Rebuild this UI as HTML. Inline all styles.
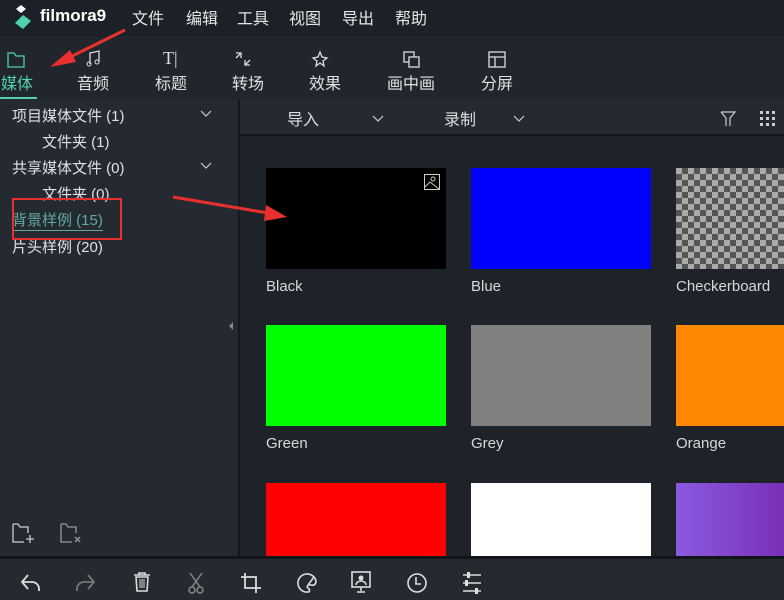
<!DOCTYPE html>
<html><head><meta charset="utf-8"><style>
*{margin:0;padding:0;box-sizing:border-box}
body{width:784px;height:600px;overflow:hidden;background:#1e2229;font-family:"Liberation Sans","Noto Sans CJK SC",sans-serif;color:#e4e6e8;position:relative}
.a{position:absolute}
.top{left:0;top:0;width:784px;height:36px;background:#1c2027}
.menu{top:5px;font-size:16px;color:#e6e6e6}
.tabs{left:0;top:37px;width:784px;height:62px;background:#21262d}
.tab{top:70px;font-size:16px;color:#e0e0e0}
.left{left:0;top:99px;width:238px;height:457px;background:#252a32}
.vd{left:238px;top:99px;width:2px;height:457px;background:#15181c}
.li{font-size:15px;color:#e0e0e0}
.hdr{left:240px;top:99px;width:544px;height:37px;background:#252a32;border-bottom:2px solid #14171b}
.th{width:180px;height:101px}
.lb{font-size:15px;color:#d8d8d8}
.bot{left:0;top:556px;width:784px;height:44px;background:#252a31;border-top:3px solid #111418}
svg{position:absolute;overflow:visible}
</style></head><body>
<div class="a top"></div>
<svg style="left:14px;top:5px" width="22" height="24" viewBox="0 0 22 24"><path d="M2 4l5-4 5 4-5 4z" fill="#fff"/><path d="M9 10l8 6-8 8-8-6z" fill="#4fd1b0"/></svg>
<div class="a" style="left:40px;top:6px;font-size:17px;font-weight:bold;color:#fff">filmora9</div>
<div class="a menu" style="left:132px">文件</div>
<div class="a menu" style="left:186px">编辑</div>
<div class="a menu" style="left:237px">工具</div>
<div class="a menu" style="left:289px">视图</div>
<div class="a menu" style="left:342px">导出</div>
<div class="a menu" style="left:395px">帮助</div>
<div class="a tabs"></div>
<svg style="left:7px;top:52px" width="18" height="16"><path d="M1 1h6l2 3h8v11H1z" fill="none" stroke="#4fd1b0" stroke-width="1.3"/></svg>
<svg style="left:85px;top:50px" width="18" height="18"><path d="M5 14V3l9-2v11" fill="none" stroke="#ddd" stroke-width="1.3"/><circle cx="4" cy="14" r="2" fill="none" stroke="#ddd"/><circle cx="12" cy="12" r="2" fill="none" stroke="#ddd"/></svg>
<div class="a" style="left:163px;top:48px;font-size:18px;color:#ddd;font-family:'Liberation Serif',serif">T|</div>
<svg style="left:234px;top:51px" width="18" height="16"><path d="M2 7l5-5M2 2h5v5M16 9l-5 5M16 14h-5v-5" fill="none" stroke="#ddd" stroke-width="1.3"/></svg>
<svg style="left:311px;top:51px" width="18" height="16"><path d="M9 1l2 5 5 1-4 3 1 5-4-3-4 3 1-5-4-3 5-1z" fill="none" stroke="#ddd" stroke-width="1.3"/></svg>
<svg style="left:403px;top:51px" width="18" height="18"><rect x="1" y="1" width="10" height="10" fill="none" stroke="#ddd" stroke-width="1.3"/><rect x="6" y="6" width="10" height="10" fill="#21262d" stroke="#ddd" stroke-width="1.3"/></svg>
<svg style="left:488px;top:51px" width="18" height="18"><rect x="1" y="1" width="16" height="15" fill="none" stroke="#ddd" stroke-width="1.3"/><path d="M1 6h16M7 6v10" stroke="#ddd" stroke-width="1.3"/></svg>
<div class="a tab" style="left:1px;color:#4fd1b0">媒体</div>
<div class="a" style="left:0;top:97px;width:37px;height:2px;background:#4fd1b0"></div>
<div class="a tab" style="left:77px">音频</div>
<div class="a tab" style="left:155px">标题</div>
<div class="a tab" style="left:232px">转场</div>
<div class="a tab" style="left:309px">效果</div>
<div class="a tab" style="left:387px">画中画</div>
<div class="a tab" style="left:481px">分屏</div>
<div class="a left"></div>
<div class="a vd"></div>
<div class="a" style="left:229px;top:322px;width:0;height:0;border:4px solid transparent;border-right:4px solid #888;border-left:0"></div>
<div class="a li" style="left:12px;top:105px">项目媒体文件 (1)</div>
<div class="a li" style="left:42px;top:131px">文件夹 (1)</div>
<div class="a li" style="left:12px;top:157px">共享媒体文件 (0)</div>
<div class="a li" style="left:42px;top:183px">文件夹 (0)</div>
<div class="a li" style="left:12px;top:209px;color:#5fa9a0;border-bottom:1px solid #5fa9a0">背景样例 (15)</div>
<div class="a li" style="left:12px;top:236px">片头样例 (20)</div>
<svg style="left:200px;top:110px" width="12" height="8"><path d="M1 1l5 5 5-5" fill="none" stroke="#ccc" stroke-width="1.2"/></svg>
<svg style="left:200px;top:162px" width="12" height="8"><path d="M1 1l5 5 5-5" fill="none" stroke="#ccc" stroke-width="1.2"/></svg>
<div class="a" style="left:12px;top:198px;width:110px;height:42px;border:2px solid #e8302e"></div>
<svg style="left:12px;top:523px" width="26" height="22"><path d="M1 1h5l2 3h8v6M1 1v18h11M14 16h8M18 12v8" fill="none" stroke="#ccc" stroke-width="1.3"/></svg>
<svg style="left:60px;top:523px" width="26" height="22"><path d="M1 1h5l2 3h8v6M1 1v18h11M15 14l5 5M20 14l-5 5" fill="none" stroke="#999" stroke-width="1.3"/></svg>
<div class="a hdr"></div>
<div class="a" style="left:287px;top:106px;font-size:16px;color:#ddd">导入</div>
<svg style="left:372px;top:115px" width="12" height="8"><path d="M1 1l5 5 5-5" fill="none" stroke="#ccc" stroke-width="1.2"/></svg>
<div class="a" style="left:444px;top:106px;font-size:16px;color:#ddd">录制</div>
<svg style="left:513px;top:115px" width="12" height="8"><path d="M1 1l5 5 5-5" fill="none" stroke="#ccc" stroke-width="1.2"/></svg>
<svg style="left:720px;top:111px" width="16" height="16"><path d="M1 1h14l-5 6v8M6 7v8M1 1l5 6" fill="none" stroke="#ccc" stroke-width="1.2"/></svg>
<svg style="left:760px;top:111px" width="16" height="16" fill="#ccc"><rect x="0" y="0" width="3" height="3"/><rect x="6" y="0" width="3" height="3"/><rect x="12" y="0" width="3" height="3"/><rect x="0" y="6" width="3" height="3"/><rect x="6" y="6" width="3" height="3"/><rect x="12" y="6" width="3" height="3"/><rect x="0" y="12" width="3" height="3"/><rect x="6" y="12" width="3" height="3"/><rect x="12" y="12" width="3" height="3"/></svg>
<div class="a th" style="left:266px;top:168px;background:#000"></div>
<svg style="left:424px;top:174px" width="16" height="16"><rect x="0.5" y="0.5" width="15" height="15" fill="none" stroke="#ccc"/><circle cx="9" cy="5" r="2" fill="none" stroke="#ccc"/><path d="M1 13l5-5 9 7" fill="none" stroke="#ccc"/></svg>
<div class="a th" style="left:471px;top:168px;background:#0000ff"></div>
<div class="a th" style="left:676px;top:168px;width:108px;background:repeating-conic-gradient(#555 0 25%,#a9a9a9 0 50%) 0 0/12px 12px"></div>
<div class="a lb" style="left:266px;top:278px">Black</div>
<div class="a lb" style="left:471px;top:278px">Blue</div>
<div class="a lb" style="left:676px;top:278px">Checkerboard</div>
<div class="a th" style="left:266px;top:325px;background:#00ff00"></div>
<div class="a th" style="left:471px;top:325px;background:#808080"></div>
<div class="a th" style="left:676px;top:325px;width:108px;background:#ff8800"></div>
<div class="a lb" style="left:266px;top:435px">Green</div>
<div class="a lb" style="left:471px;top:435px">Grey</div>
<div class="a lb" style="left:676px;top:435px">Orange</div>
<div class="a th" style="left:266px;top:483px;height:73px;background:#ff0000"></div>
<div class="a th" style="left:471px;top:483px;height:73px;background:#fff"></div>
<div class="a th" style="left:676px;top:483px;width:108px;height:73px;background:linear-gradient(90deg,#8a5ae0,#7a2fb8)"></div>
<div class="a bot"></div>
<svg style="left:20px;top:573px" width="22" height="20"><path d="M8 2L2 9l6 7M2 9h10a7 7 0 0 1 7 7v2" fill="none" stroke="#ddd" stroke-width="1.8"/></svg>
<svg style="left:76px;top:573px" width="22" height="20"><path d="M12 2l6 7-6 7M18 9H8a7 7 0 0 0-7 7v2" fill="none" stroke="#777" stroke-width="1.8"/></svg>
<svg style="left:133px;top:572px" width="18" height="20"><path d="M1 3h16M6 3V1h6v2M3 5h12l-1 14H4z" fill="none" stroke="#ddd" stroke-width="1.6"/><path d="M7 7v9M9 7v9M11 7v9" stroke="#ddd"/></svg>
<svg style="left:187px;top:572px" width="18" height="22"><path d="M3 1l10 14M15 1L5 15" stroke="#888" stroke-width="1.5"/><circle cx="5" cy="18" r="3" fill="none" stroke="#888" stroke-width="1.5"/><circle cx="13" cy="18" r="3" fill="none" stroke="#888" stroke-width="1.5"/></svg>
<svg style="left:240px;top:572px" width="22" height="22"><path d="M5 1v15h16M1 5h15v16" fill="none" stroke="#ddd" stroke-width="1.8"/></svg>
<svg style="left:296px;top:572px" width="22" height="22"><path d="M10 2a9 9 0 1 0 2 18c2 0 2-3 0-4s0-4 3-3 5-1 5-4A9 9 0 0 0 10 2z" fill="none" stroke="#ddd" stroke-width="1.6"/><path d="M12 13l6-8" stroke="#ddd" stroke-width="1.6"/></svg>
<svg style="left:350px;top:571px" width="22" height="22"><rect x="2" y="1" width="18" height="15" fill="none" stroke="#ddd" stroke-width="1.6"/><circle cx="11" cy="7" r="2.5" fill="#ddd"/><path d="M6 14a5 4 0 0 1 10 0M11 16v4M7 21h8" stroke="#ddd" stroke-width="1.6" fill="none"/></svg>
<svg style="left:406px;top:572px" width="22" height="22"><circle cx="11" cy="11" r="9" fill="none" stroke="#ddd" stroke-width="1.6"/><path d="M10 5v7h5" fill="none" stroke="#ddd" stroke-width="1.6"/></svg>
<svg style="left:461px;top:572px" width="22" height="22"><path d="M2 3h18M2 11h18M2 19h18" stroke="#ddd" stroke-width="1.6"/><rect x="6" y="0" width="3" height="6" fill="#ddd"/><rect x="4" y="8" width="3" height="6" fill="#ddd"/><rect x="14" y="16" width="3" height="6" fill="#ddd"/></svg>
<svg style="left:0;top:0" width="784" height="600"><path d="M125 30L64 60" stroke="#e8302e" stroke-width="3"/><path d="M50 67L70 50 76 62z" fill="#e8302e"/><path d="M173 197L268 213" stroke="#e8302e" stroke-width="3"/><path d="M287 217L266 205 264 221z" fill="#e8302e"/></svg>
</body></html>
